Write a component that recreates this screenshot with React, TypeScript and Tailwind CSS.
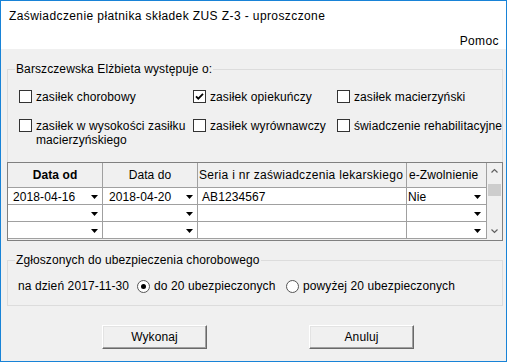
import type { ReactNode } from "react";

interface Row {
  from: string;
  to: string;
  serial: string;
  eLeave: string;
}

const rows: Row[] = [
  { from: "2018-04-16", to: "2018-04-20", serial: "AB1234567", eLeave: "Nie" },
  { from: "", to: "", serial: "", eLeave: "" },
  { from: "", to: "", serial: "", eLeave: "" },
];

function DropArrow() {
  return (
    <svg className="shrink-0" width="7" height="4" viewBox="0 0 7 4">
      <polygon points="0,0 7,0 3.5,4" fill="#000" />
    </svg>
  );
}

function Chevron({ up }: { up?: boolean }) {
  return (
    <svg width="7" height="5" viewBox="0 0 7 5">
      <polyline
        points={up ? "0.5,4.5 3.5,1.5 6.5,4.5" : "0.5,0.5 3.5,3.5 6.5,0.5"}
        fill="none"
        stroke="#606060"
        strokeWidth="1.2"
      />
    </svg>
  );
}

function Checkbox({ checked = false, children }: { checked?: boolean; children: ReactNode }) {
  return (
    <label className="flex items-start whitespace-nowrap">
      <span className="flex h-[13px] w-[13px] shrink-0 items-center justify-center border border-[#333] bg-white">
        {checked && (
          <svg width="11" height="11" viewBox="0 0 11 11">
            <path d="M2 5.3 L4.3 7.6 L9 2.8" fill="none" stroke="#000" strokeWidth="1.8" />
          </svg>
        )}
      </span>
      <span className="ml-[4px]">{children}</span>
    </label>
  );
}

function Radio({ checked = false, children }: { checked?: boolean; children: ReactNode }) {
  return (
    <label className="flex items-center whitespace-nowrap">
      <span className="flex h-[13px] w-[13px] shrink-0 items-center justify-center rounded-full border border-[#555] bg-white">
        {checked && <span className="h-[5px] w-[5px] rounded-full bg-black" />}
      </span>
      <span className="ml-[4px]">{children}</span>
    </label>
  );
}

function Button({ children }: { children: ReactNode }) {
  return (
    <button className="flex h-[24px] w-[105px] items-center justify-center border border-t-white border-l-white border-r-[#696969] border-b-[#696969] bg-[#f0f0f0] shadow-[inset_-1px_-1px_0_#a0a0a0,inset_1px_1px_0_#e3e3e3]">
      {children}
    </button>
  );
}

function SickTable() {
  return (
    <div className="-mx-px -mb-px flex border border-[#808080] bg-[#f0f0f0] pb-px">
      <div className="grid grid-cols-[95px_95px_209px_80px]">
        <div className="flex h-[25px] items-center justify-center border-r border-b border-[#a0a0a0] font-bold">
          Data od
        </div>
        <div className="flex h-[25px] items-center justify-center border-r border-b border-[#a0a0a0]">
          Data do
        </div>
        <div className="flex h-[25px] items-center overflow-hidden whitespace-nowrap border-r border-b border-[#a0a0a0] pl-[1px] tracking-[0.3px]">
          Seria i nr zaświadczenia lekarskiego
        </div>
        <div className="flex h-[25px] items-center whitespace-nowrap border-r border-b border-[#a0a0a0] pl-[2px]">
          e-Zwolnienie
        </div>

        {rows.map((row, i) => (
          <div key={i} className="contents">
            <div className="flex h-[17px] items-center justify-between border-r border-b border-[#a0a0a0] bg-white pt-px pr-[4px] pl-[5px]">
              <span>{row.from}</span>
              <DropArrow />
            </div>
            <div className="flex h-[17px] items-center justify-between border-r border-b border-[#a0a0a0] bg-white pt-px pr-[4px] pl-[6px]">
              <span>{row.to}</span>
              <DropArrow />
            </div>
            <div className="flex h-[17px] items-center border-r border-b border-[#a0a0a0] bg-white pt-px pl-[4px]">
              {row.serial}
            </div>
            <div className="flex h-[17px] items-center justify-between border-r border-b border-[#a0a0a0] bg-white pt-px pr-[5px] pl-[1px]">
              <span>{row.eLeave}</span>
              <DropArrow />
            </div>
          </div>
        ))}
      </div>

      <div className="flex w-[15px] flex-col">
        <div className="flex h-[15px] items-center justify-center">
          <Chevron up />
        </div>
        <div className="mt-[6px] ml-[1px] h-[12px] w-[13px] bg-[#cdcdcd]" />
        <div className="mt-auto flex h-[15px] items-center justify-center">
          <Chevron />
        </div>
      </div>
    </div>
  );
}

export default function App() {
  return (
    <div className="flex h-[362px] w-[507px] flex-col border border-[#1883d7] bg-[#f0f0f0] font-['Liberation_Sans',Arial,sans-serif] text-[12px] leading-[14px] tracking-[0.1px] text-black">
      <div className="bg-white">
        <div className="flex h-[30px] items-center pl-[8px] tracking-[0.4px]">
          Zaświadczenie płatnika składek ZUS Z-3 - uproszczone
        </div>
        <div className="flex h-[18px] justify-end pt-[3px] pr-[7px] tracking-[0.4px]">Pomoc</div>
      </div>

      <fieldset className="mt-[13px] ml-[6px] w-[496px] border border-[#dcdcdc]">
        <legend className="ml-[7px] px-[1px]">Barszczewska Elżbieta występuje o:</legend>
        <div className="pt-[14px] pl-[11px]">
          <div className="grid h-[29px] grid-cols-[174px_144px_1fr]">
            <Checkbox>zasiłek chorobowy</Checkbox>
            <Checkbox checked>zasiłek opiekuńczy</Checkbox>
            <Checkbox>zasiłek macierzyński</Checkbox>
          </div>
          <div className="mb-[15px] grid h-[28px] grid-cols-[174px_144px_1fr]">
            <Checkbox>
              zasiłek w wysokości zasiłku
              <br />
              macierzyńskiego
            </Checkbox>
            <Checkbox>zasiłek wyrównawczy</Checkbox>
            <Checkbox>świadczenie rehabilitacyjne</Checkbox>
          </div>
        </div>
        <SickTable />
      </fieldset>

      <fieldset className="mt-[12px] ml-[6px] w-[496px] border border-[#dcdcdc]">
        <legend className="ml-[7px] px-[1px]">Zgłoszonych do ubezpieczenia chorobowego</legend>
        <div className="flex h-[38px] items-center pt-[12px] pb-[12px] pl-[10px]">
          <span className="w-[119px] whitespace-nowrap">na dzień 2017-11-30</span>
          <div className="w-[149px]">
            <Radio checked>do 20 ubezpieczonych</Radio>
          </div>
          <Radio>powyżej 20 ubezpieczonych</Radio>
        </div>
      </fieldset>

      <div className="mt-[19px] flex gap-[102px] pl-[101px]">
        <Button>Wykonaj</Button>
        <Button>Anuluj</Button>
      </div>
    </div>
  );
}
